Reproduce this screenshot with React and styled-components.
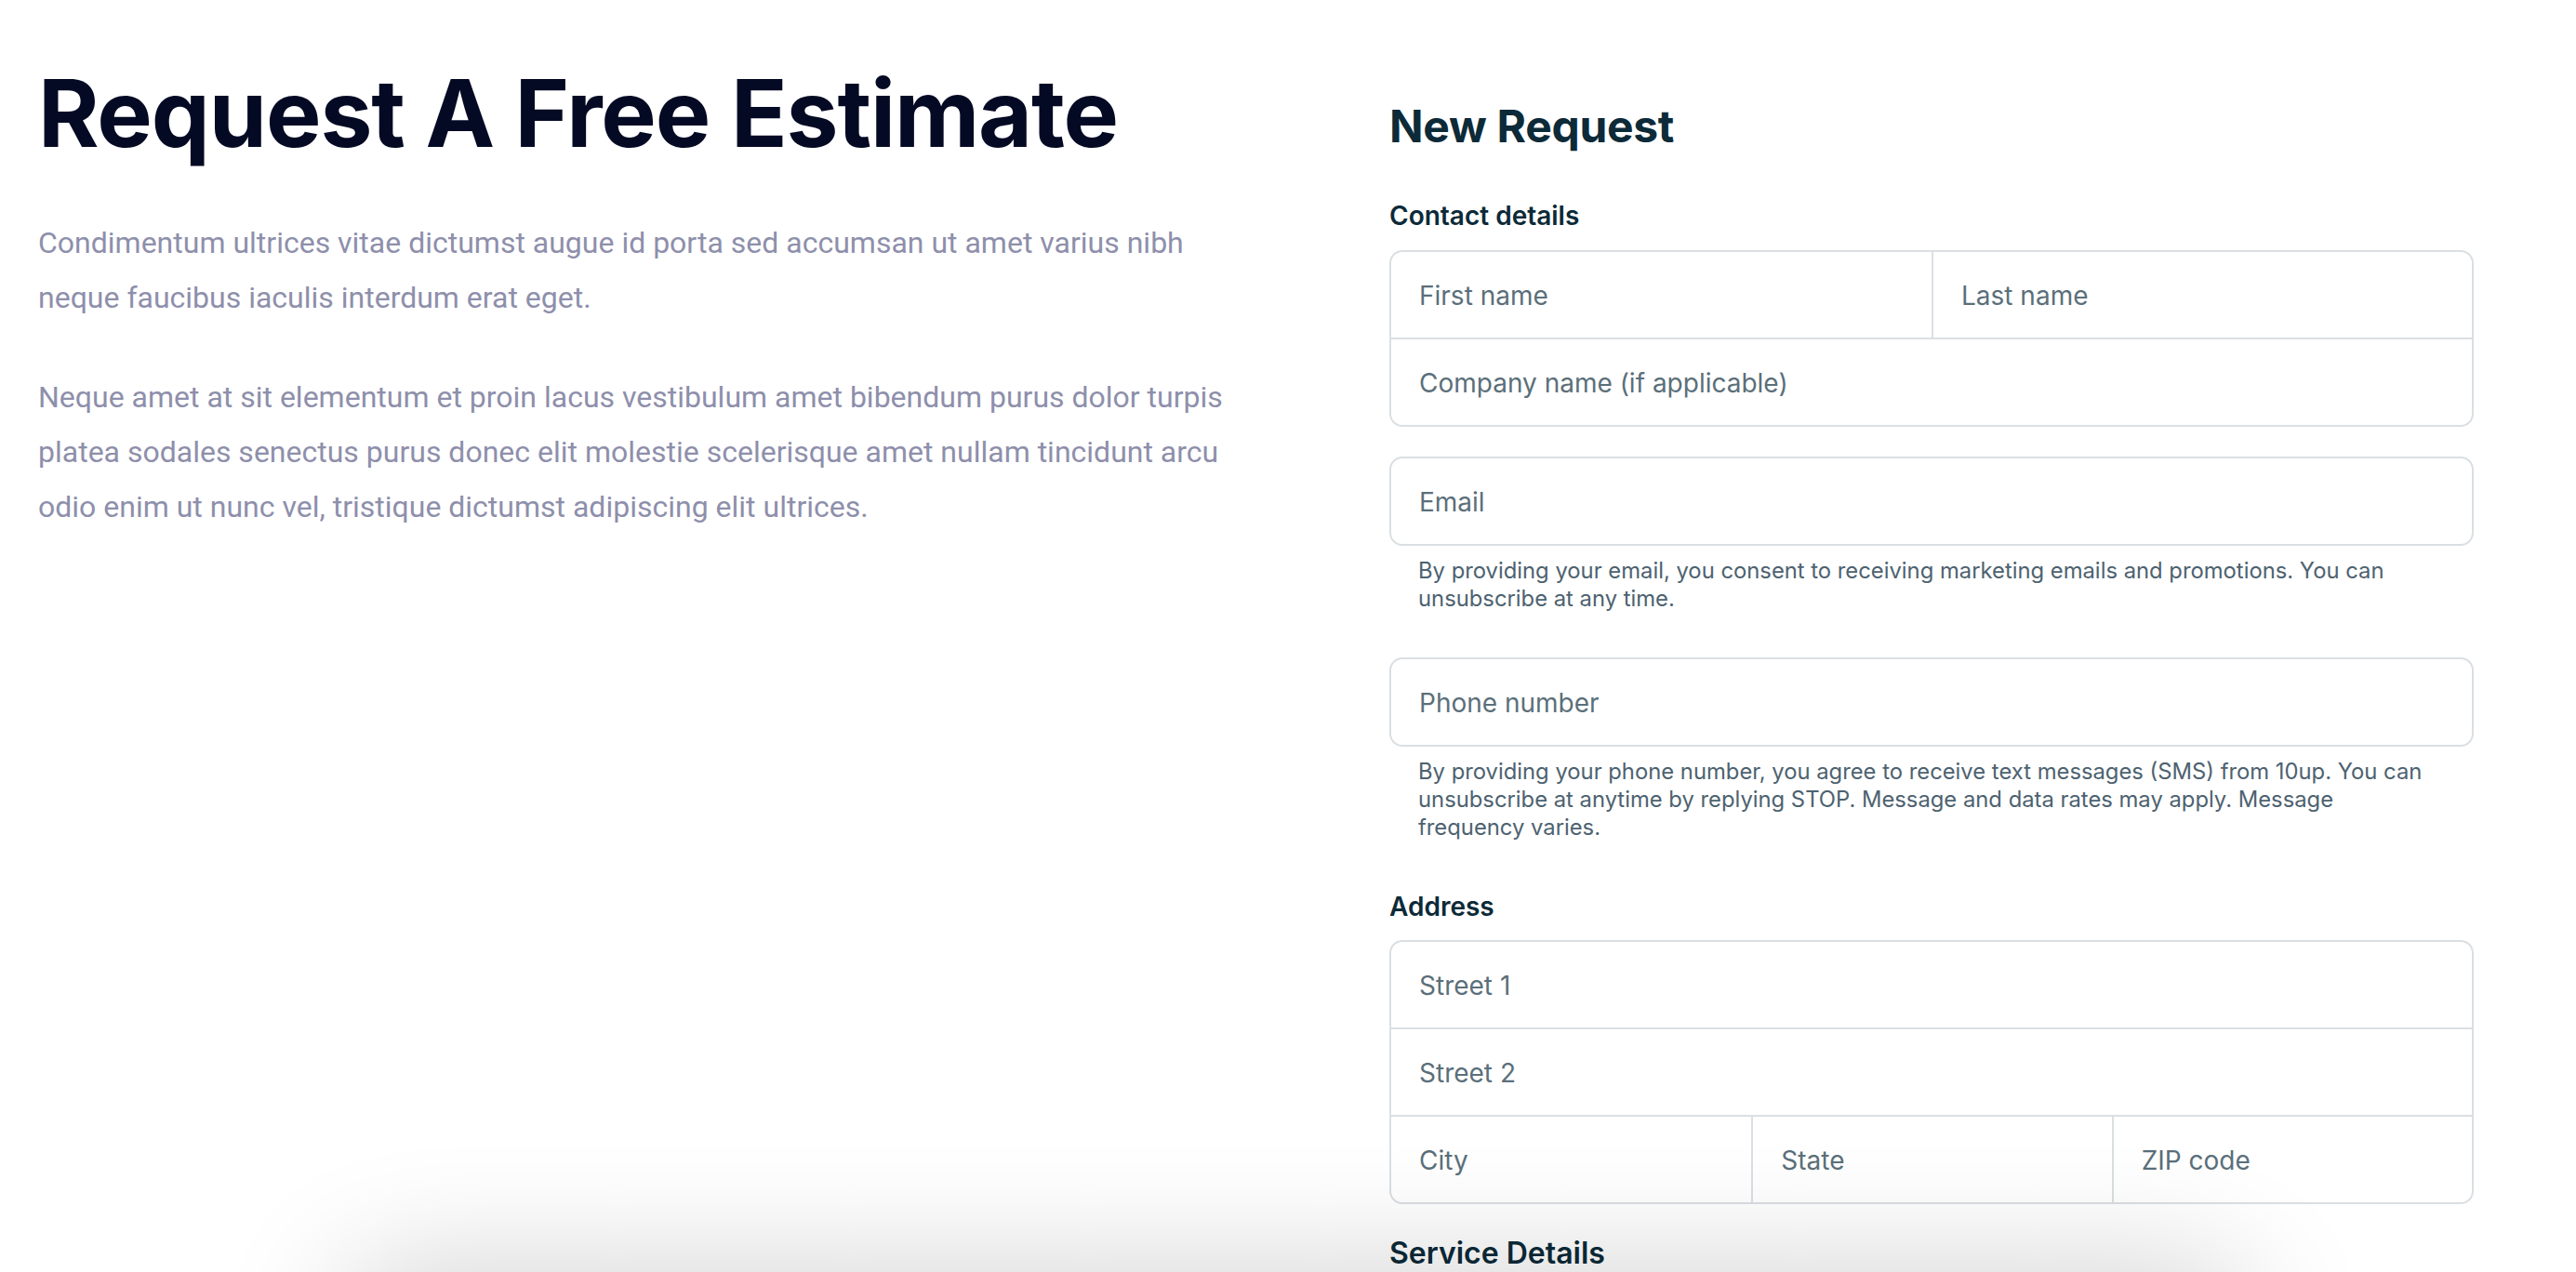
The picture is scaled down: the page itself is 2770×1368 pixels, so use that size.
import React from 'react'
import styled, { createGlobalStyle } from 'styled-components'

const GlobalStyle = createGlobalStyle`
  * { box-sizing: border-box; }
  body {
    margin: 0;
    background: #ffffff;
    font-family: 'Inter', 'Liberation Sans', sans-serif;
  }
`

const COLORS = {
  title: '#050a24',
  lead: '#8e8fab',
  ink: '#0c2a38',
  border: '#dadfe3',
  placeholder: '#5b6f7a',
  help: '#4d6270',
}

const contactRows = [['First name', 'Last name'], ['Company name (if applicable)']]
const addressRows = [['Street 1'], ['Street 2'], ['City', 'State', 'ZIP code']]

const FieldBox = ({ rows }) => (
  <StyledFieldBox>
    {rows.map((row, i) => (
      <StyledFieldRow key={i} $cols={row.length}>
        {row.map((label) => (
          <StyledInput key={label} type="text" placeholder={label} aria-label={label} />
        ))}
      </StyledFieldRow>
    ))}
  </StyledFieldBox>
)

export default function App() {
  return (
    <>
      <GlobalStyle />
      <StyledPage>
        <StyledIntro>
          <StyledTitle>Request A Free Estimate</StyledTitle>
          <StyledLead>
            Condimentum ultrices vitae dictumst augue id porta sed accumsan ut amet varius nibh neque
            faucibus iaculis interdum erat eget.
          </StyledLead>
          <StyledLead $second>
            Neque amet at sit elementum et proin lacus vestibulum amet bibendum purus dolor turpis
            platea sodales senectus purus donec elit molestie scelerisque amet nullam tincidunt arcu
            odio enim ut nunc vel, tristique dictumst adipiscing elit ultrices.
          </StyledLead>
        </StyledIntro>

        <StyledForm onSubmit={(e) => e.preventDefault()}>
          <StyledFormTitle>New Request</StyledFormTitle>

          <StyledSectionLabel>Contact details</StyledSectionLabel>
          <FieldBox rows={contactRows} />

          <StyledGroup $gap={32}>
            <FieldBox rows={[['Email']]} />
            <StyledHelp>
              By providing your email, you consent to receiving marketing emails and promotions. You
              can unsubscribe at any time.
            </StyledHelp>
          </StyledGroup>

          <StyledGroup $gap={48}>
            <FieldBox rows={[['Phone number']]} />
            <StyledHelp>
              By providing your phone number, you agree to receive text messages (SMS) from 10up. You
              can unsubscribe at anytime by replying STOP. Message and data rates may apply. Message
              frequency varies.
            </StyledHelp>
          </StyledGroup>

          <StyledSectionLabel $top={53} $bottom={19}>Address</StyledSectionLabel>
          <FieldBox rows={addressRows} />

          <StyledSectionLabel $top={34} $large>Service Details</StyledSectionLabel>
          <StyledTextArea placeholder="Describe the work you need done" rows={5} />
        </StyledForm>
      </StyledPage>
      <StyledBottomShade aria-hidden="true" />
    </>
  )
}

const StyledPage = styled.main`
display: grid;
grid-template-columns: 1320px 1166px;
column-gap: 133px;
align-items: start;
padding: 62px 0 80px 41px;
`

const StyledIntro = styled.section`
display: flex;
flex-direction: column;
`

const StyledTitle = styled.h1`
margin: 0;
font-family: 'Inter', 'Liberation Sans', sans-serif;
font-weight: 700;
font-size: 100px;
line-height: 120px;
letter-spacing: -1.1px;
color: ${COLORS.title};
`

const StyledLead = styled.p`
margin: ${(p) => (p.$second ? '48px' : '50px')} 0 0;
font-family: 'Roboto', 'Liberation Sans', sans-serif;
font-weight: 400;
font-size: 32px;
line-height: 59px;
color: ${COLORS.lead};
`

const StyledForm = styled.form`
display: flex;
flex-direction: column;
padding-top: 44px;
`

const StyledFormTitle = styled.h2`
margin: 0;
font-weight: 700;
font-size: 48px;
line-height: 60px;
letter-spacing: -0.3px;
color: ${COLORS.ink};
`

const StyledSectionLabel = styled.h3`
margin: ${(p) => p.$top ?? 49}px 0 ${(p) => p.$bottom ?? 20}px;
font-weight: 600;
font-size: ${(p) => (p.$large ? '32px' : '28px')};
line-height: ${(p) => (p.$large ? '38px' : '34px')};
color: ${COLORS.ink};
`

const StyledGroup = styled.div`
display: flex;
flex-direction: column;
margin-top: ${(p) => p.$gap}px;
`

const StyledFieldBox = styled.div`
display: flex;
flex-direction: column;
border: 2px solid ${COLORS.border};
border-radius: 14px;
overflow: hidden;
background: #ffffff;
`

const StyledFieldRow = styled.div`
display: grid;
grid-template-columns: repeat(${(p) => p.$cols}, 1fr);

& + & {
    border-top: 2px solid ${COLORS.border};
}
`

const StyledInput = styled.input`
height: 92px;
min-width: 0;
padding: 2px 30px 0;
border: none;
outline: none;
background: transparent;
font-family: 'Inter', 'Liberation Sans', sans-serif;
font-size: 28px;
color: ${COLORS.ink};

& + & {
    border-left: 2px solid ${COLORS.border};
}
&::placeholder {
    color: ${COLORS.placeholder};
    opacity: 1;
}
`

const StyledHelp = styled.p`
margin: 0;
padding: 12px 32px 0 31px;
font-size: 23.8px;
line-height: 30px;
color: ${COLORS.help};
`

const StyledTextArea = styled.textarea`
height: 240px;
padding: 26px 30px;
border: 2px solid ${COLORS.border};
border-radius: 14px;
resize: none;
font-family: 'Inter', 'Liberation Sans', sans-serif;
font-size: 28px;
color: ${COLORS.ink};

&::placeholder {
    color: ${COLORS.placeholder};
}
`

const StyledBottomShade = styled.div`
position: fixed;
top: 100%;
left: 365px;
right: 350px;
height: 120px;
border-radius: 60px;
background: #ffffff;
box-shadow: 0 0 140px rgba(0, 0, 0, 0.2);
pointer-events: none;
`
